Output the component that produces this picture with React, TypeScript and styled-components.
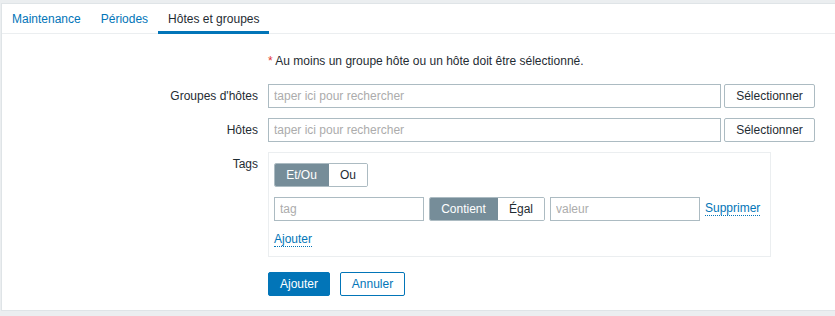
import React from 'react';
import styled, { createGlobalStyle } from 'styled-components';

const GlobalStyle = createGlobalStyle`
  html, body {
    margin: 0;
    padding: 0;
    background: #ebeef0;
    overflow: hidden;
  }
  body {
    font-family: "Liberation Sans", Arial, sans-serif;
    font-size: 12px;
    color: #1f2c33;
  }
  * { box-sizing: border-box; }
`;

const Container = styled.div`
  margin: 3px 0 0 1px;
  background: #fff;
  border: 1px solid #dfe4e7;
  border-right: none;
  height: 308px;
`;

const TabNav = styled.ul`
  display: flex;
  list-style: none;
  margin: 0;
  padding: 0;
  border-bottom: 1px solid #ebeef0;
`;

const Tab = styled.li<{ $active?: boolean }>`
  position: relative;
  padding: 8px 10px 7px;
  line-height: 14px;
  color: ${p => (p.$active ? '#1f2c33' : '#0275b8')};
  cursor: pointer;

  &::after {
    content: '';
    display: ${p => (p.$active ? 'block' : 'none')};
    position: absolute;
    left: 0;
    right: 0;
    bottom: -1px;
    height: 3px;
    background: #0275b8;
  }
`;

const Form = styled.div`
  display: grid;
  grid-template-columns: 256px 1fr;
  column-gap: 10px;
  row-gap: 10px;
  padding: 16px 0 15px;
`;

const Label = styled.div`
  text-align: right;
  line-height: 24px;
  height: 24px;
`;

const Note = styled.div`
  line-height: 22px;
  padding-bottom: 2px;
`;

const Asterisk = styled.span`
  color: #e33734;
`;

const Field = styled.div`
  display: flex;
  align-items: center;
  gap: 3px;
`;

const Input = styled.input<{ $width: number }>`
  width: ${p => p.$width}px;
  height: 24px;
  border: 1px solid #acbbc2;
  border-radius: 0;
  padding: 0 5px;
  font-family: inherit;
  font-size: 12px;
  color: #1f2c33;
  background: #fff;
  outline: none;

  &::placeholder {
    color: #acacac;
  }
`;

const Button = styled.button<{ $width: number }>`
  width: ${p => p.$width}px;
  height: 24px;
  border: 1px solid #acbbc2;
  border-radius: 2px;
  background: #fff;
  color: #1f2c33;
  font-family: inherit;
  font-size: 12px;
  padding: 0;
  cursor: pointer;
`;

const TagsBox = styled.div`
  width: 503px;
  border: 1px solid #ebeef0;
  padding: 10px 5px 4px;
  display: flex;
  flex-direction: column;
  gap: 10px;
`;

const Radio = styled.div`
  display: flex;
  height: 24px;
  border: 1px solid #acbbc2;
  border-radius: 2px;
  overflow: hidden;
  width: max-content;
`;

const RadioOption = styled.div<{ $checked?: boolean; $width: number }>`
  width: ${p => p.$width}px;
  display: flex;
  align-items: center;
  justify-content: center;
  background: ${p => (p.$checked ? '#768d99' : '#fff')};
  color: ${p => (p.$checked ? '#fff' : '#1f2c33')};
  margin: -1px 0 -1px ${p => (p.$checked ? '-1px' : '0')};
`;

const TagRow = styled.div`
  display: flex;
  align-items: center;
  gap: 5px;
`;

const Link = styled.a`
  color: #0275b8;
  text-decoration: none;
  border-bottom: 1px dotted #0275b8;
  line-height: 13px;
  cursor: pointer;
`;

const LinkRow = styled.div`
  height: 24px;
  margin-top: -3px;
  display: flex;
  align-items: center;
`;

const Actions = styled.div`
  display: flex;
  gap: 10px;
  margin-top: 5px;
`;

const PrimaryButton = styled(Button)`
  background: #0275b8;
  border-color: #0275b8;
  color: #fff;
`;

const SecondaryButton = styled(Button)`
  border-color: #0275b8;
  color: #0275b8;
`;

export default function App() {
  return (
    <>
      <GlobalStyle />
      <Container>
        <TabNav>
          <Tab>Maintenance</Tab>
          <Tab>Périodes</Tab>
          <Tab $active>Hôtes et groupes</Tab>
        </TabNav>
        <Form>
          <div />
          <Note>
            <Asterisk>*</Asterisk> Au moins un groupe hôte ou un hôte doit être sélectionné.
          </Note>

          <Label>Groupes d'hôtes</Label>
          <Field>
            <Input $width={453} placeholder="taper ici pour rechercher" />
            <Button $width={91}>Sélectionner</Button>
          </Field>

          <Label>Hôtes</Label>
          <Field>
            <Input $width={453} placeholder="taper ici pour rechercher" />
            <Button $width={91}>Sélectionner</Button>
          </Field>

          <Label>Tags</Label>
          <TagsBox>
            <Radio>
              <RadioOption $checked $width={55}>Et/Ou</RadioOption>
              <RadioOption $width={38}>Ou</RadioOption>
            </Radio>
            <TagRow>
              <Input $width={150} placeholder="tag" />
              <Radio>
                <RadioOption $checked $width={69}>Contient</RadioOption>
                <RadioOption $width={46}>Égal</RadioOption>
              </Radio>
              <Input $width={150} placeholder="valeur" />
              <Link>Supprimer</Link>
            </TagRow>
            <LinkRow>
              <Link>Ajouter</Link>
            </LinkRow>
          </TagsBox>

          <div />
          <Actions>
            <PrimaryButton $width={62}>Ajouter</PrimaryButton>
            <SecondaryButton $width={65}>Annuler</SecondaryButton>
          </Actions>
        </Form>
      </Container>
    </>
  );
}
